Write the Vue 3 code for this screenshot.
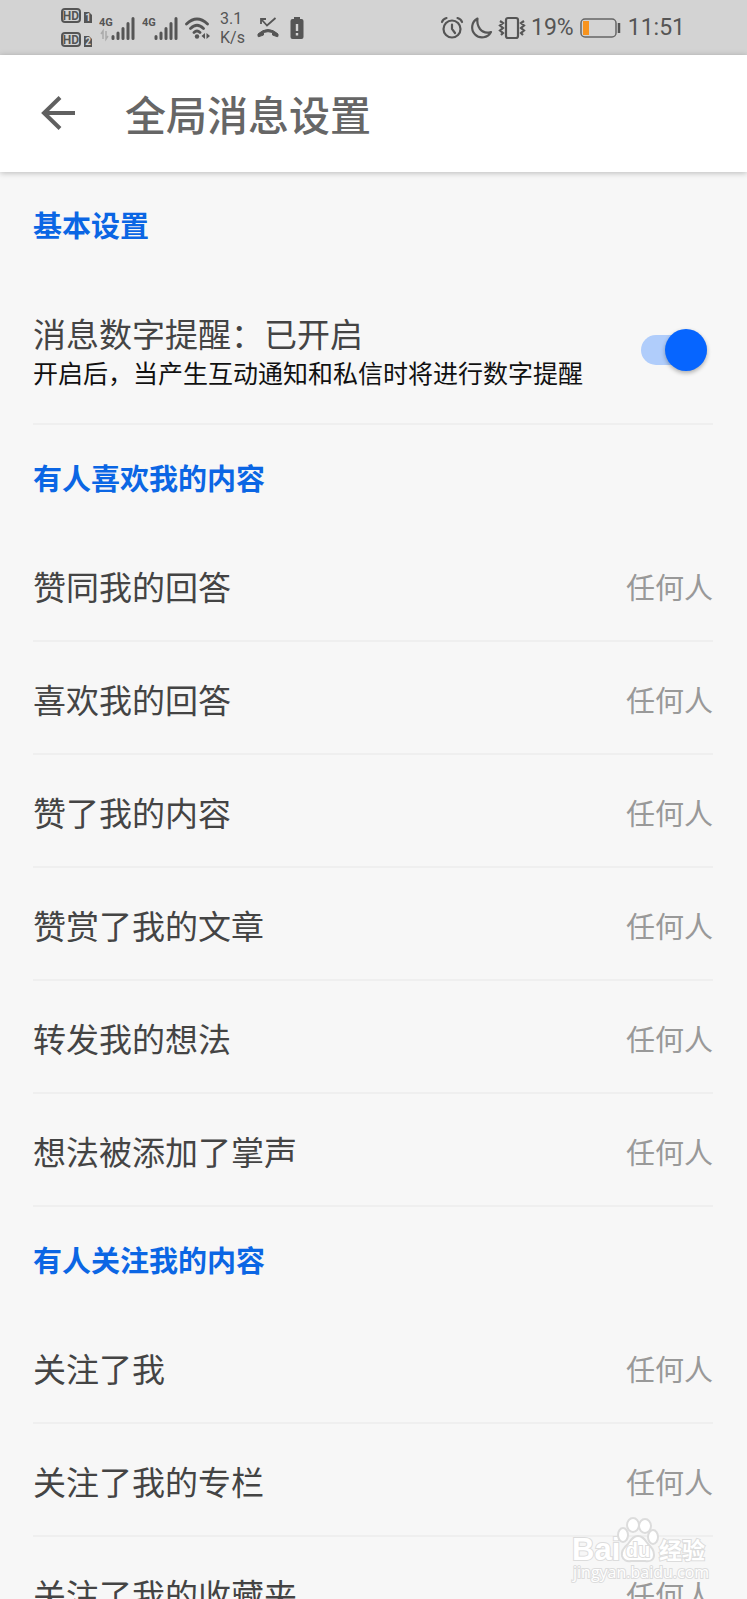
<script setup>
import { ref } from 'vue'

const reminder = ref(true)

const groups = [
  {
    title: '有人喜欢我的内容',
    items: ['赞同我的回答', '喜欢我的回答', '赞了我的内容', '赞赏了我的文章', '转发我的想法', '想法被添加了掌声'],
  },
  {
    title: '有人关注我的内容',
    items: ['关注了我', '关注了我的专栏', '关注了我的收藏夹'],
  },
]
</script>

<template>
  <div class="screen">
    <div class="status">
      <div class="status-side">
        <svg class="hd" width="32" height="40" viewBox="0 0 32 40">
          <g v-for="n in 2" :key="n" :transform="`translate(0 ${(n - 1) * 24})`">
            <rect x="1" y="1" width="18" height="13" rx="3" fill="none" stroke="#555" stroke-width="2" />
            <text class="hd-text" x="10" y="12" text-anchor="middle">HD</text>
            <path d="M23 4h5l3 3v8h-8z" fill="#555" />
            <text class="hd-num" x="27" y="13" text-anchor="middle">{{ n }}</text>
          </g>
        </svg>
        <svg v-for="n in 2" :key="n" class="signal" width="36" height="28" viewBox="0 0 36 28">
          <text class="net" x="0" y="12">4G</text>
          <path v-if="n === 1" d="M4 25v-8l-2 3M7 17v8l2-3" fill="none" stroke="#aaa" stroke-width="1.500" />
          <path d="M14 22.500v2M19 19v5.500M24 14.500v10M29 9.500v15M34 4.500v20" fill="none" stroke="#555" stroke-width="3" stroke-linecap="round" />
        </svg>
        <svg class="wifi" width="28" height="24" viewBox="0 0 28 24">
          <path d="M1.500 8q10.500-10 21 0M5.500 12.500q6.500-6.500 13 0M9 16.500q3-3 6 0" fill="none" stroke="#555" stroke-width="2.800" stroke-linecap="round" />
          <circle cx="12" cy="20.500" r="2.200" fill="#555" />
          <path d="M20 17v6l-3.500-3zM21.500 17v6l3.500-3z" fill="#555" />
        </svg>
        <div class="speed"><span>3.1</span><span>K/s</span></div>
        <svg class="call" width="24" height="24" viewBox="0 0 24 24">
          <path d="M5 8V3h5M5.500 3.500l5.500 6 8.500-7.500" fill="none" stroke="#555" stroke-width="1.800" />
          <path d="M2 18q10-9 20 0v2q0 1-1 .6l-4.500-1.600V16.500q-4.500-1.600-9 0V19L3 20.600q-1 .4-1-.6z" fill="#555" stroke="#555" stroke-linejoin="round" />
        </svg>
        <svg width="14" height="24" viewBox="0 0 14 24">
          <path d="M4 1h6v2h1.500q2 0 2 2v16q0 2-2 2h-9q-2 0-2-2V5q0-2 2-2H4z" fill="#555" />
          <path d="M7 8v7M7 17v2.500" stroke="#d3d3d3" stroke-width="2.400" />
        </svg>
      </div>
      <div class="status-side">
        <svg width="24" height="24" viewBox="0 0 24 24" fill="none" stroke="#555" stroke-width="2.200" stroke-linecap="round">
          <circle cx="12" cy="13" r="8.500" />
          <path d="M12 8.500V13l3 4M2 6q1-3 4.500-4M22 6q-1-3-4.500-4" />
        </svg>
        <svg class="moon" width="24" height="24" viewBox="0 0 24 24">
          <path d="M8.500 2.500A10 10 0 1 0 22 16Q15 18 11 13 7.500 8 8.500 2.500z" fill="none" stroke="#555" stroke-width="2.200" stroke-linejoin="round" />
        </svg>
        <svg class="vibrate" width="28" height="24" viewBox="0 0 28 24" fill="none" stroke="#555" stroke-width="2.200">
          <rect x="8" y="2" width="12" height="20" rx="2" />
          <path d="M2 5l3 2-3 2.500 3 2.500-3 2.500 3 2.500-2 2M26 5l-3 2 3 2.500-3 2.500 3 2.500-3 2.500 2 2" />
        </svg>
        <span class="percent">19%</span>
        <svg class="battery" width="41" height="20" viewBox="0 0 41 20">
          <rect x="1" y="1" width="35" height="18" rx="4" fill="none" stroke="#666" stroke-width="1.500" />
          <rect x="3" y="3" width="6" height="14" fill="#f7931e" />
          <path d="M39 5v10" stroke="#555" stroke-width="2.500" />
        </svg>
        <span class="clock">11:51</span>
      </div>
    </div>

    <header class="bar">
      <button class="back" type="button" aria-label="返回">
        <svg width="36" height="36" viewBox="0 0 36 36" fill="none" stroke="#606060" stroke-width="4">
          <path d="M35 18H4M20 2.500L4 18 20 33.500" />
        </svg>
      </button>
      <h1>全局消息设置</h1>
    </header>

    <main class="list">
      <h2>基本设置</h2>
      <div class="row switch-row">
        <label for="reminder" class="texts">
          <span class="name">消息数字提醒：{{ reminder ? '已开启' : '已关闭' }}</span>
          <span class="desc">开启后，当产生互动通知和私信时将进行数字提醒</span>
        </label>
        <input id="reminder" v-model="reminder" class="switch" type="checkbox" role="switch">
      </div>

      <section v-for="group in groups" :key="group.title">
        <h2>{{ group.title }}</h2>
        <button v-for="item in group.items" :key="item" class="row" type="button">
          <span class="name">{{ item }}</span>
          <span class="value">任何人</span>
        </button>
      </section>
    </main>

    <svg class="watermark" width="144" height="72" viewBox="0 0 144 72">
      <g fill="#fff" stroke="#dcdcdc" stroke-width="2">
        <text class="wm-logo" x="4" y="48">Bai</text>
        <ellipse cx="55" cy="23" rx="5" ry="7" />
        <ellipse cx="65" cy="13" rx="6" ry="7" />
        <ellipse cx="77" cy="14" rx="6" ry="7" />
        <ellipse cx="85" cy="25" rx="5" ry="7" />
        <path d="M70 24c-5 0-7 4-10 8-5 4-7 7-6 12 1 4 5 6 9 5h14c5 1 9-1 9-6s-2-7-6-11c-3-4-5-8-10-8z" />
        <text class="wm-du" x="70" y="45" text-anchor="middle">du</text>
        <text class="wm-cn" x="91" y="47">经验</text>
        <text class="wm-url" x="5" y="66">jingyan.baidu.com</text>
      </g>
    </svg>
  </div>
</template>

<style>
body {
    margin: 0;
    background: #f7f7f7;
}
</style>

<style scoped>
.screen {
    position: relative;
    display: flex;
    flex-direction: column;
    height: 100vh;
    overflow: hidden;
    background: #f7f7f7;
    color: #444;
    font-family: "Noto Sans CJK SC", sans-serif;
}

.status {
    display: flex;
    flex: none;
    align-items: center;
    justify-content: space-between;
    height: 55px;
    padding: 0 62px 0 61px;
    background: #d3d3d3;
    color: #555;
    font-family: Roboto, sans-serif;
}

.status-side {
    display: flex;
    align-items: center;
}

.hd {
    margin-right: 6px;
}

.hd-text {
    fill: #555;
    font-size: 12px;
    font-weight: 700;
}

.hd-num {
    fill: #d3d3d3;
    font-size: 10px;
    font-weight: 700;
}

.signal {
    margin-right: 7px;
}

.net {
    fill: #555;
    font-family: Roboto, sans-serif;
    font-size: 11px;
    font-weight: 700;
}

.wifi {
    margin-right: 7px;
}

.speed {
    display: flex;
    flex-direction: column;
    margin-right: 11px;
    font-size: 16px;
    line-height: 19px;
}

.call {
    margin-right: 10px;
}

.moon {
    margin: 0 5px;
}

.vibrate {
    margin-right: 5px;
}

.percent,
.clock {
    font-size: 23px;
    line-height: 28px;
}

.battery {
    margin: 0 7px 0 6px;
}

.bar {
    z-index: 1;
    display: flex;
    flex: none;
    align-items: center;
    box-sizing: border-box;
    height: 117px;
    padding: 0 40px 2px;
    background: #fff;
    box-shadow: 0 1px 6px rgba(0, 0, 0, 0.25);
}

.back {
    display: flex;
    margin-right: 49px;
    padding: 0;
    border: 0;
    background: none;
}

h1 {
    margin: 0;
    color: #666;
    font-size: 41px;
    font-weight: 500;
    line-height: 60px;
}

.list {
    flex: 1;
    min-height: 0;
    padding: 0 34px 0 33px;
    overflow-y: auto;
    scrollbar-width: none;
}

h2 {
    margin: 0;
    padding: 32px 0;
    color: #0b66e4;
    font-size: 29px;
    font-weight: 700;
    line-height: 40px;
}

.row {
    display: flex;
    align-items: center;
    justify-content: space-between;
    width: 100%;
    padding: 37px 0 34px;
    border: 0;
    border-bottom: 2px solid #efefef;
    background: none;
    color: #444;
    font: inherit;
    text-align: left;
}

.name {
    font-size: 33px;
    line-height: 40px;
}

.value {
    color: #999;
    font-size: 29px;
    line-height: 40px;
}

.switch-row {
    box-sizing: border-box;
    padding: 37px 6px 32px 0;
}

.texts {
    display: flex;
    flex-direction: column;
}

.desc {
    color: #111;
    font-size: 25px;
    line-height: 38px;
}

.switch {
    display: flex;
    align-items: center;
    width: 66px;
    height: 30px;
    margin: 0 0 4px;
    border-radius: 15px;
    background: #ccc;
    appearance: none;
}

.switch::before {
    width: 42px;
    height: 42px;
    border-radius: 50%;
    background: #fff;
    box-shadow: 0 2px 4px rgba(0, 0, 0, 0.3);
    content: "";
}

.switch:checked {
    justify-content: flex-end;
    background: #b0cdfb;
}

.switch:checked::before {
    background: #0665ff;
}

.watermark {
    position: absolute;
    right: 35px;
    bottom: 15px;
    pointer-events: none;
}

.watermark text {
    paint-order: stroke;
}

.wm-logo {
    font-family: "Liberation Sans", sans-serif;
    font-size: 31px;
    font-weight: 700;
}

.wm-du {
    font-family: "Liberation Sans", sans-serif;
    font-size: 20px;
    font-weight: 700;
}

.wm-cn {
    font-size: 23px;
    font-weight: 700;
}

.wm-url {
    font-family: "Open Sans", sans-serif;
    font-size: 16px;
}
</style>
